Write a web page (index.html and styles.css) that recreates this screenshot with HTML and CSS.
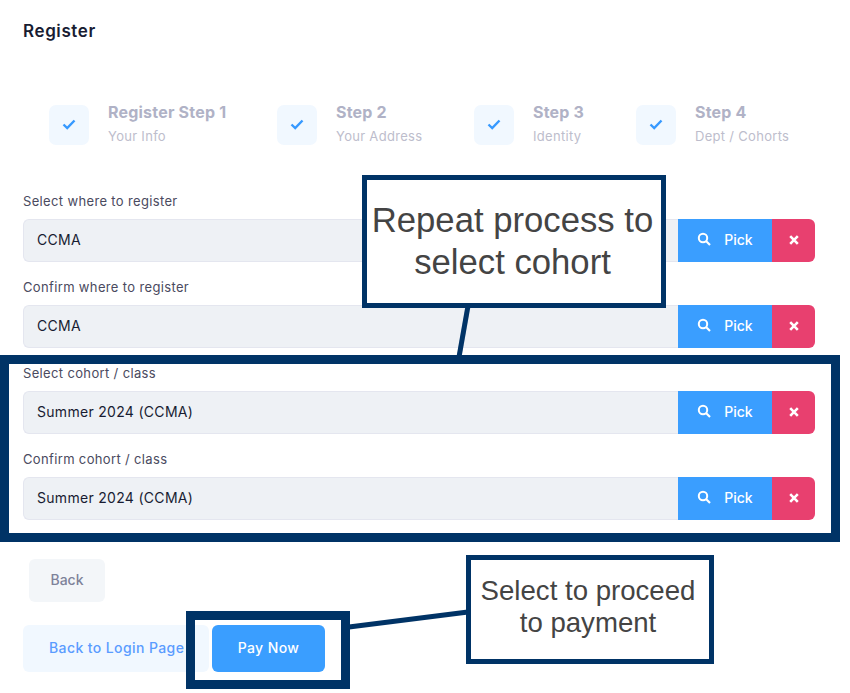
FILE: index.html
```html
<!DOCTYPE html>
<html lang="en">
<head>
  <meta charset="UTF-8">
  <meta name="viewport" content="width=device-width, initial-scale=1.0">
  <title>Register</title>
  <link rel="stylesheet" href="styles.css">
</head>
<body>
  <h1 class="title">Register</h1>

  <div class="steps">
    <div class="step step1">
      <div class="stepIcon"><svg width="14" height="14" viewBox="0 0 14 14"><path d="M1.5 7.5 L5.2 11 L12.5 3.5" fill="none" stroke="#3699ff" stroke-width="2.4"/></svg></div>
      <div>
        <div class="stepName">Register Step 1</div>
        <div class="stepSub">Your Info</div>
      </div>
    </div>
    <div class="step step2">
      <div class="stepIcon"><svg width="14" height="14" viewBox="0 0 14 14"><path d="M1.5 7.5 L5.2 11 L12.5 3.5" fill="none" stroke="#3699ff" stroke-width="2.4"/></svg></div>
      <div>
        <div class="stepName">Step 2</div>
        <div class="stepSub">Your Address</div>
      </div>
    </div>
    <div class="step step3">
      <div class="stepIcon"><svg width="14" height="14" viewBox="0 0 14 14"><path d="M1.5 7.5 L5.2 11 L12.5 3.5" fill="none" stroke="#3699ff" stroke-width="2.4"/></svg></div>
      <div>
        <div class="stepName">Step 3</div>
        <div class="stepSub">Identity</div>
      </div>
    </div>
    <div class="step">
      <div class="stepIcon"><svg width="14" height="14" viewBox="0 0 14 14"><path d="M1.5 7.5 L5.2 11 L12.5 3.5" fill="none" stroke="#3699ff" stroke-width="2.4"/></svg></div>
      <div>
        <div class="stepName">Step 4</div>
        <div class="stepSub">Dept / Cohorts</div>
      </div>
    </div>
  </div>

  <div class="campos">
    <div class="campo">
      <label class="etiqueta">Select where to register</label>
      <div class="fila">
        <input class="valor" type="text" value="CCMA" readonly>
        <button class="pick"><svg width="14" height="14" viewBox="0 0 14 14"><circle cx="6" cy="6" r="4.2" fill="none" stroke="#fff" stroke-width="2"/><path d="M9 9 L13 13" stroke="#fff" stroke-width="2.2"/></svg>Pick</button>
        <button class="quitar"><svg width="10" height="10" viewBox="0 0 10 10"><path d="M1.2 1.2 L8.8 8.8 M8.8 1.2 L1.2 8.8" stroke="#fff" stroke-width="2.6"/></svg></button>
      </div>
    </div>
    <div class="campo">
      <label class="etiqueta">Confirm where to register</label>
      <div class="fila">
        <input class="valor" type="text" value="CCMA" readonly>
        <button class="pick"><svg width="14" height="14" viewBox="0 0 14 14"><circle cx="6" cy="6" r="4.2" fill="none" stroke="#fff" stroke-width="2"/><path d="M9 9 L13 13" stroke="#fff" stroke-width="2.2"/></svg>Pick</button>
        <button class="quitar"><svg width="10" height="10" viewBox="0 0 10 10"><path d="M1.2 1.2 L8.8 8.8 M8.8 1.2 L1.2 8.8" stroke="#fff" stroke-width="2.6"/></svg></button>
      </div>
    </div>
    <div class="campo">
      <label class="etiqueta">Select cohort / class</label>
      <div class="fila">
        <input class="valor" type="text" value="Summer 2024 (CCMA)" readonly>
        <button class="pick"><svg width="14" height="14" viewBox="0 0 14 14"><circle cx="6" cy="6" r="4.2" fill="none" stroke="#fff" stroke-width="2"/><path d="M9 9 L13 13" stroke="#fff" stroke-width="2.2"/></svg>Pick</button>
        <button class="quitar"><svg width="10" height="10" viewBox="0 0 10 10"><path d="M1.2 1.2 L8.8 8.8 M8.8 1.2 L1.2 8.8" stroke="#fff" stroke-width="2.6"/></svg></button>
      </div>
    </div>
    <div class="campo">
      <label class="etiqueta">Confirm cohort / class</label>
      <div class="fila">
        <input class="valor" type="text" value="Summer 2024 (CCMA)" readonly>
        <button class="pick"><svg width="14" height="14" viewBox="0 0 14 14"><circle cx="6" cy="6" r="4.2" fill="none" stroke="#fff" stroke-width="2"/><path d="M9 9 L13 13" stroke="#fff" stroke-width="2.2"/></svg>Pick</button>
        <button class="quitar"><svg width="10" height="10" viewBox="0 0 10 10"><path d="M1.2 1.2 L8.8 8.8 M8.8 1.2 L1.2 8.8" stroke="#fff" stroke-width="2.6"/></svg></button>
      </div>
    </div>
  </div>

  <button class="atras">Back</button>
  <div class="botones">
    <button class="login">Back to Login Page</button>
    <button class="pagar">Pay Now</button>
  </div>

  <!-- anotaciones encima de la captura -->
  <svg class="lineas" width="850" height="693" viewBox="0 0 850 693">
    <path d="M468 306 L459 357" stroke="#003366" stroke-width="5"/>
    <path d="M349 627 L468 612" stroke="#003366" stroke-width="5"/>
  </svg>
  <div class="marco marcoCohort"></div>
  <div class="marco marcoPago"></div>
  <div class="nota notaCohort">Repeat process to<br>select cohort</div>
  <div class="nota notaPago">Select to proceed<br>to payment</div>
</body>
</html>
```

FILE: styles.css
```css
* {
  box-sizing: border-box;
}

html, body {
  height: 693px;
  overflow: hidden;
}

body {
  position: relative;
  margin: 0;
  padding: 20px 35px 0 23px;
  font-family: Inter, 'Noto Sans', sans-serif;
  background-color: #fff;
}

.title {
  margin: 0;
  font-size: 17px;
  line-height: 22px;
  letter-spacing: 0.6px;
  font-weight: 600;
  color: #181c32;
}

/* Pasos */
.steps {
  display: flex;
  margin: 63px 0 0 26px;
  height: 40px;
}

.step {
  display: flex;
  gap: 19px;
}

.step1 {
  width: 228px;
}

.step2 {
  width: 197px;
}

.step3 {
  width: 162px;
}

.stepIcon {
  display: flex;
  align-items: center;
  justify-content: center;
  width: 40px;
  height: 40px;
  padding-bottom: 2px;
  border-radius: 7px;
  background-color: #f1f8ff;
}

.stepName {
  font-size: 16px;
  line-height: 16px;
  letter-spacing: 0.2px;
  font-weight: 700;
  color: #b0b2c6;
  margin-top: -1px;
  white-space: nowrap;
}

.stepSub {
  font-size: 13px;
  line-height: 16px;
  letter-spacing: 0.3px;
  margin-top: 8px;
  color: #bdbdcc;
  white-space: nowrap;
}

/* Campos */
.campos {
  margin-top: 47px;
}

.campo {
  height: 86px;
}

.etiqueta {
  display: block;
  height: 18px;
  margin-bottom: 9px;
  font-size: 13px;
  line-height: 18px;
  letter-spacing: 0.35px;
  color: #4a4a60;
}

.fila {
  display: flex;
  height: 43px;
}

.valor {
  flex: 1;
  min-width: 0;
  padding: 0 13px 2px;
  border: 1px solid #e4e6ef;
  border-right: none;
  border-radius: 6px 0 0 6px;
  background-color: #eef1f5;
  font-family: inherit;
  font-size: 14px;
  letter-spacing: 0.3px;
  color: #181c32;
}

button {
  border: none;
  font-family: inherit;
  font-weight: 500;
  cursor: pointer;
}

.pick {
  display: flex;
  align-items: center;
  justify-content: center;
  gap: 13px;
  width: 94px;
  padding: 0 0 3px;
  background-color: #3a9eff;
  color: #fff;
  font-size: 14px;
}

.quitar {
  display: flex;
  align-items: center;
  justify-content: center;
  width: 43px;
  padding: 0 0 2px;
  border-radius: 0 6px 6px 0;
  background-color: #e8406f;
}

/* Botones de abajo */
.atras {
  display: block;
  width: 76px;
  height: 43px;
  margin: 23px 0 0 6px;
  padding: 0 0 2px;
  border-radius: 6px;
  background-color: #f3f6f9;
  color: #7e8299;
  font-size: 14px;
}

.botones {
  display: flex;
  gap: 3px;
  margin-top: 23px;
}

.login {
  width: 186px;
  height: 47px;
  border-radius: 6px;
  background-color: #f1f8ff;
  color: #5a9cff;
  font-size: 14px;
  letter-spacing: 0.4px;
  white-space: nowrap;
  padding: 0 0 2px 26px;
  text-align: left;
}

.pagar {
  width: 113px;
  height: 47px;
  padding: 0 0 2px;
  border-radius: 6px;
  background-color: #3a9eff;
  color: #fff;
  font-size: 14px;
  letter-spacing: 0.4px;
}

/* Anotaciones */
.lineas {
  position: absolute;
  left: 0;
  top: 0;
}

.marco {
  position: absolute;
  border: 9.5px solid #003366;
}

.marcoCohort {
  left: 0;
  top: 355px;
  width: 840px;
  height: 187px;
}

.marcoPago {
  left: 186px;
  top: 611px;
  width: 164px;
  height: 78px;
}

.nota {
  position: absolute;
  display: flex;
  align-items: center;
  justify-content: center;
  text-align: center;
  border: 5px solid #003366;
  background-color: #fff;
  font-family: 'Liberation Sans', Arial, sans-serif;
  color: #444;
}

.notaCohort {
  left: 362px;
  top: 175px;
  width: 304px;
  height: 133px;
  padding: 0 3px 2px 0;
  font-size: 34.7px;
  line-height: 42px;
}

.notaPago {
  left: 466px;
  top: 555px;
  width: 248px;
  height: 109px;
  padding: 0 4px 5px 0;
  font-size: 27.6px;
  line-height: 32px;
}
```
